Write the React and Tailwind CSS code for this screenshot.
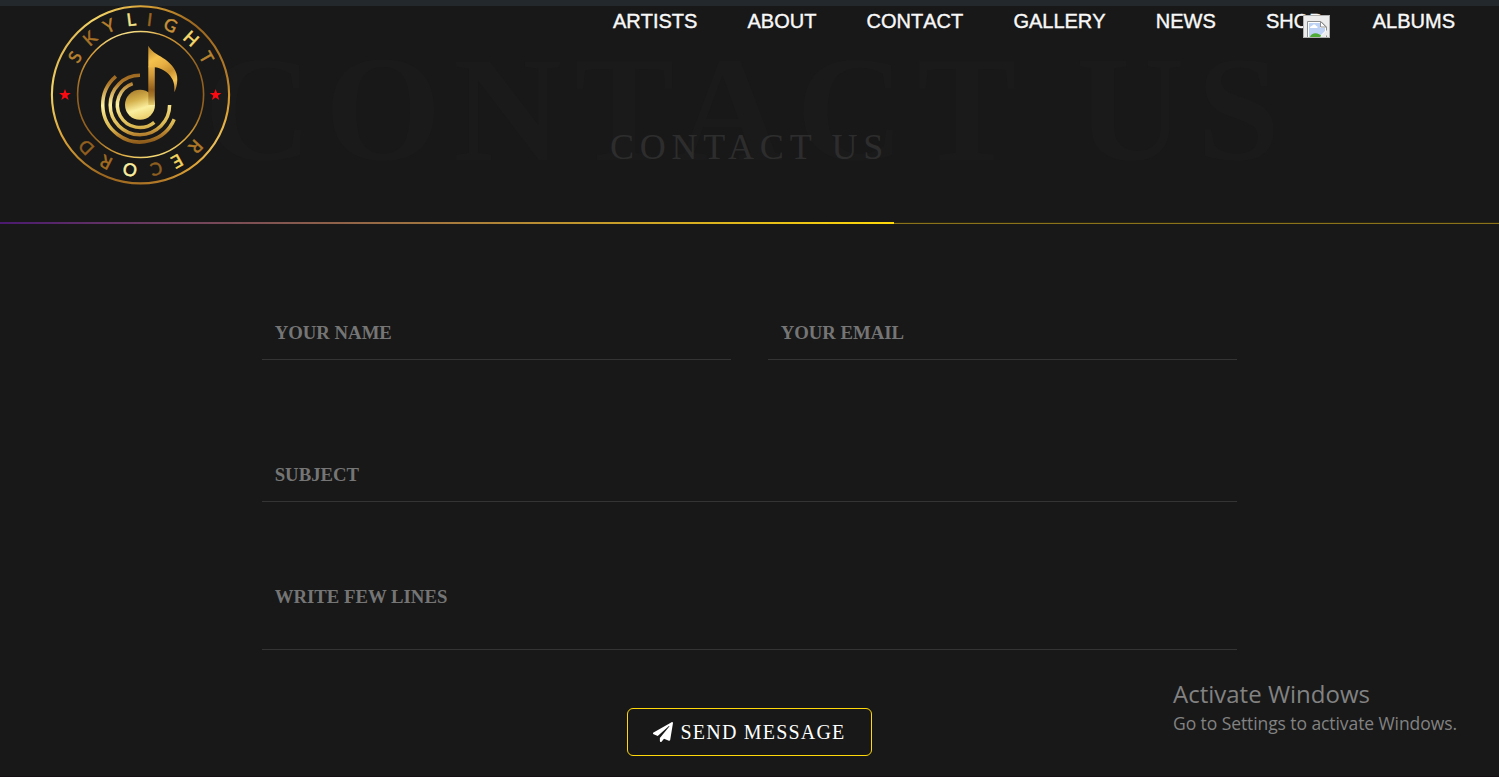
import { FaPaperPlane } from "react-icons/fa";

const NAV = ["ARTISTS", "ABOUT", "CONTACT", "GALLERY", "NEWS", "SHOP", "ALBUMS"];

const RING_LETTERS = [
  ["S", -60, "#b8812f"],
  ["K", -42, "#a87226"],
  ["Y", -24.5, "#b8812d"],
  ["L", -7, "#f7e38a"],
  ["I", 7, "#9a651f"],
  ["G", 23.5, "#c8923a"],
  ["H", 42, "#f7d96c"],
  ["T", 60.5, "#b8842f"],
  ["R", 133, "#b07826"],
  ["E", 151, "#f3d45f"],
  ["C", 168, "#8f5f20"],
  ["O", 188, "#fbf0a0"],
  ["R", 207, "#a36c20"],
  ["D", 226, "#94601e"],
];

const STAR = "M0-6 1.5-1.9 5.9-1.9 2.3.8 3.7 5.1 0 2.5-3.7 5.1-2.3.8-5.9-1.9-1.5-1.9Z";

function Logo() {
  return (
    <svg viewBox="50 5 181 180" className="block h-[180px] w-[181px]">
      <defs>
        <linearGradient id="ring" gradientUnits="userSpaceOnUse" x1="51" y1="40" x2="230" y2="150">
          <stop offset="0" stopColor="#c08a30" />
          <stop offset="0.12" stopColor="#f2d468" />
          <stop offset="0.3" stopColor="#d8a035" />
          <stop offset="0.55" stopColor="#9a651e" />
          <stop offset="0.8" stopColor="#b27a28" />
          <stop offset="0.9" stopColor="#e0a536" />
          <stop offset="0.97" stopColor="#fff7a8" />
          <stop offset="1" stopColor="#c08a30" />
        </linearGradient>
        <linearGradient id="innerRing" gradientUnits="userSpaceOnUse" x1="120" y1="31" x2="150" y2="158">
          <stop offset="0" stopColor="#fff09a" />
          <stop offset="0.12" stopColor="#d39a36" />
          <stop offset="0.4" stopColor="#8f5f20" />
          <stop offset="0.75" stopColor="#94621f" />
          <stop offset="0.92" stopColor="#d9a43c" />
          <stop offset="1" stopColor="#f5dc78" />
        </linearGradient>
        <linearGradient id="arcs" gradientUnits="userSpaceOnUse" x1="134" y1="70" x2="140" y2="143">
          <stop offset="0" stopColor="#8f5c1c" />
          <stop offset="0.16" stopColor="#b07a2a" />
          <stop offset="0.45" stopColor="#fff3a0" />
          <stop offset="0.62" stopColor="#e8cc6a" />
          <stop offset="0.78" stopColor="#d9b650" />
          <stop offset="0.88" stopColor="#b88430" />
          <stop offset="1" stopColor="#8c5a1a" />
        </linearGradient>
        <linearGradient id="disc" gradientUnits="userSpaceOnUse" x1="133" y1="89" x2="143" y2="120">
          <stop offset="0" stopColor="#a87a2a" />
          <stop offset="0.35" stopColor="#d4b04c" />
          <stop offset="0.65" stopColor="#fbf0a0" />
          <stop offset="1" stopColor="#e8cc68" />
        </linearGradient>
        <linearGradient id="flag" gradientUnits="userSpaceOnUse" x1="150" y1="46" x2="178" y2="91">
          <stop offset="0" stopColor="#b8832a" />
          <stop offset="0.25" stopColor="#f6c24e" />
          <stop offset="0.42" stopColor="#e8b044" />
          <stop offset="0.6" stopColor="#c8902f" />
          <stop offset="0.8" stopColor="#f8c654" />
          <stop offset="1" stopColor="#a87026" />
        </linearGradient>
        <linearGradient id="stem" gradientUnits="userSpaceOnUse" x1="0" y1="65" x2="0" y2="106">
          <stop offset="0" stopColor="#ecb64a" />
          <stop offset="0.25" stopColor="#d09838" />
          <stop offset="0.6" stopColor="#945f1c" />
          <stop offset="0.75" stopColor="#a87a2c" />
          <stop offset="1" stopColor="#ecd676" />
        </linearGradient>
      </defs>
      <circle cx="140.5" cy="94.8" r="88.6" fill="none" stroke="url(#ring)" strokeWidth="2.1" />
      <circle cx="140.6" cy="94.5" r="63" fill="none" stroke="url(#innerRing)" strokeWidth="1.6" />
      {RING_LETTERS.map(([ch, angle, fill], i) => (
        <text
          key={i}
          transform={`rotate(${angle} 140.5 94.8)`}
          x="140.5"
          y="25.3"
          textAnchor="middle"
          fill={fill}
          fontSize="17.5"
          fontFamily="Lato, sans-serif"
          stroke={fill}
          strokeWidth="0.5"
        >
          {ch}
        </text>
      ))}
      <path d={STAR} transform="translate(65 95)" fill="#fb0a12" />
      <path d={STAR} transform="translate(215.6 95)" fill="#fb0a12" />
      <g fill="none" stroke="url(#arcs)" strokeWidth="3.5">
        <path d="M115.9 76.4A37.2 37.2 0 1 0 174.2 119.3" />
        <path d="M140 75.3A29.7 29.7 0 1 0 169.6 105" />
        <path d="M132.7 83.7A22.5 22.5 0 1 0 154.3 122.3" />
      </g>
      <circle cx="140" cy="104.8" r="15" fill="url(#disc)" />
      <path d="M148.3 66.500H154.800V105H148.300Z" fill="url(#stem)" />
      <path
        d="M148.3 45.8C152 53 160 55.500 165 59.300C172 64.500 177.700 71.500 177.300 80C177.200 85 176 89 174.300 92.300C174.500 87 174.500 82.500 171.700 78.300C168 71.500 160.500 67.800 154.700 67.300H148.300Z"
        fill="url(#flag)"
      />
    </svg>
  );
}

function BrokenImage() {
  return (
    <svg viewBox="0 0 27 23" className="absolute top-[6px] left-[37px] h-[23px] w-[27px]">
      <rect width="27" height="23" fill="#b0b0b0" />
      <rect x="1" y="1" width="25" height="21" fill="#ececec" />
      <path d="M4.500 22V6.500H18L23.500 12V22" fill="#fff" stroke="#8f8f8f" />
      <path d="M6 22V8H17V13H22V16L16 22Z" fill="#bed2f6" />
      <path d="M7 13C7 11 9 11 9.500 10.500C10 9 13 9 13 11C15 11 15 13 14 13Z" fill="#fff" />
      <path d="M7 22C8.500 17 16 17 19 22Z" fill="#4eab35" />
      <path d="M17.500 6.500V12H23Z" fill="#fff" stroke="#8f8f8f" />
      <path d="M24 15V20L22 22H17Z" fill="#ececec" />
    </svg>
  );
}

function Field({ label, className }) {
  return (
    <div className={`flex border-b border-[#343434] pl-[12.700px] ${className}`}>
      <span className="text-[18.750px] leading-[24px] font-bold text-[#757575]">{label}</span>
    </div>
  );
}

export default function App() {
  return (
    <div className="relative flex h-[777px] w-[1499px] flex-col overflow-hidden border-b border-[#130e12] bg-[#181818] font-['Liberation_Serif',serif]">
      <div className="h-[6px] shrink-0 bg-[#23282d]" />
      <header className="relative h-[216px] shrink-0">
        <div className="absolute top-[17px] left-[204px] text-[150px] leading-[172px] font-bold tracking-[12.300px] whitespace-nowrap text-[#1a1a1a]">
          CONTACT US
        </div>
        <h1 className="absolute top-[120px] left-[610px] text-[36px] leading-[42px] tracking-[5.750px] whitespace-nowrap text-[#2d2d2d]">
          CONTACT US
        </h1>
        <div className="relative flex items-start justify-between pr-[44px] pl-[50px]">
          <div className="-mt-px">
            <Logo />
          </div>
          <nav className="flex gap-[50.150px] pt-[3px] font-['Liberation_Sans',sans-serif] text-[20px] leading-[24px] text-[#f8f8f8] [font-kerning:none] [-webkit-text-stroke:0.400px_#f8f8f8]">
            {NAV.map((item) => (
              <a key={item} className="relative">
                {item}
                {item === "SHOP" && <BrokenImage />}
              </a>
            ))}
          </nav>
        </div>
      </header>
      <div className="flex h-[2px] shrink-0 items-end">
        <div className="h-[2px] w-[894px] bg-linear-to-r/srgb from-[#4b1a70] to-[#ffd90a]" />
        <div className="h-[2px] flex-1 border-t border-[#29240f] bg-[#8a731a]" />
      </div>
      <form className="flex flex-col pr-[262px] pl-[262px]">
        <div className="grid grid-cols-2 gap-[37px]">
          <Field label="YOUR NAME" className="h-[136px] pt-[97px]" />
          <Field label="YOUR EMAIL" className="h-[136px] pt-[97px]" />
        </div>
        <Field label="SUBJECT" className="h-[142px] pt-[103px]" />
        <Field label="WRITE FEW LINES" className="h-[148px] pt-[83px]" />
        <div className="flex justify-center pt-[58px]">
          <button
            type="button"
            className="flex h-[48px] w-[245px] items-center rounded-[6px] border border-[#ffd90a] pl-[25px] text-white"
          >
            <FaPaperPlane className="h-[20px] w-[20px]" />
            <span className="ml-[7.500px] text-[20px] leading-[24px] tracking-[1.200px] whitespace-nowrap">SEND MESSAGE</span>
          </button>
        </div>
      </form>
      <aside className="absolute top-[678px] left-[1173px] font-['Open_Sans',sans-serif] whitespace-nowrap text-[#828282]">
        <div className="text-[24px] leading-[32px]">Activate Windows</div>
        <div className="text-[17.500px] leading-[26px] tracking-[-0.080px]">Go to Settings to activate Windows.</div>
      </aside>
    </div>
  );
}
